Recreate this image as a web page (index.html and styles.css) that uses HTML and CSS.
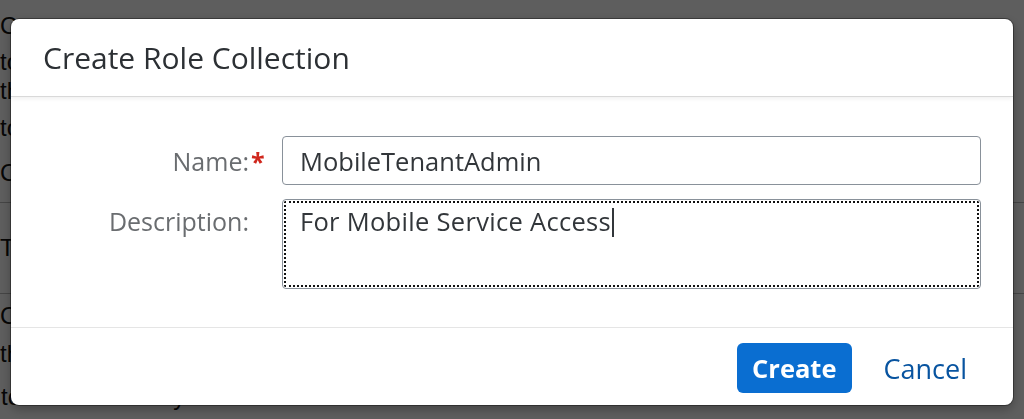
FILE: index.html
```html
<!DOCTYPE html>
<html lang="en">
<head>
  <meta charset="UTF-8" />
  <title>Create Role Collection</title>
  <link rel="stylesheet" href="styles.css">
</head>
<body>
  <!-- page behind the dialog (mostly hidden) -->
  <div class="page">
    <div class="line l1">Co</div>
    <div class="line l2">to</div>
    <div class="line l3">th</div>
    <div class="line l4">to</div>
    <div class="line l5 ruled">Cr</div>
    <div class="line l6 ruled">Th</div>
    <div class="line l7">Ch</div>
    <div class="line l8">th</div>
    <div class="line l9">to the tenant only</div>
  </div>

  <div class="overlay">
    <div class="dialog" role="dialog" aria-labelledby="dlgTitle">
      <div class="dialog-header">
        <h1 id="dlgTitle">Create Role Collection</h1>
      </div>

      <div class="dialog-body">
        <label class="form-label" for="rcName">
          <span>Name:</span><span class="req">*</span>
        </label>
        <input id="rcName" class="form-input" type="text" value="MobileTenantAdmin">

        <label class="form-label top" for="rcDesc">
          <span>Description:</span><span class="req"></span>
        </label>
        <div id="rcDesc" class="form-textarea" role="textbox" aria-multiline="true">For Mobile Service Access<span class="caret"></span></div>
      </div>

      <div class="dialog-footer">
        <button class="btn btn-primary">Create</button>
        <button class="btn btn-link">Cancel</button>
      </div>
    </div>
  </div>
</body>
</html>
```

FILE: styles.css
```css
/* GLOBAL */
* {
  box-sizing: border-box;
}

body {
  margin: 0;
  padding: 0;
  font-family: 'Open Sans', Arial, sans-serif;
  background-color: #fff;
  color: #32363a;
  overflow: hidden;
}

/* PAGE behind the overlay */
.page {
  padding-top: 8px;
  font-family: 'Liberation Sans', Arial, sans-serif;
  font-size: 24px;
  color: #111;
  white-space: nowrap;
}
.l1 { height: 36px; line-height: 36px; }
.l2 { height: 36px; line-height: 36px; }
.l3 { height: 22px; line-height: 22px; }
.l4 { height: 52px; line-height: 52px; }
.l5 { height: 49px; line-height: 38px; }
.l6 { height: 91px; line-height: 90px; }
.l7 { height: 44px; line-height: 44px; }
.l8 { height: 32px; line-height: 32px; }
.l9 { height: 54px; line-height: 54px; padding-left: 1px; }
.ruled { border-bottom: 1px solid #bbb; }

/* OVERLAY + DIALOG */
.overlay {
  position: fixed;
  inset: 0;
  display: flex;
  padding: 19px 11px 14px 11px;
  background-color: rgba(0, 0, 0, 0.63);
}

.dialog {
  flex: 1;
  display: flex;
  flex-direction: column;
  background-color: #fff;
  border-radius: 8px;
  box-shadow: 0 0 0 1px rgba(0, 0, 0, 0.35), 0 4px 12px rgba(0, 0, 0, 0.3);
}

.dialog-header {
  height: 78px;
  display: flex;
  align-items: center;
  padding: 0 32px;
  border-bottom: 1px solid #d9d9d9;
  box-shadow: 0 2px 4px rgba(0, 0, 0, 0.06);
}
.dialog-header h1 {
  margin: 0;
  font-size: 30px;
  font-weight: 400;
  color: #2c3034;
}

/* FORM */
.dialog-body {
  display: grid;
  grid-template-columns: 255px 1fr;
  column-gap: 16px;
  row-gap: 14px;
  padding: 39px 32px 38px 0;
}

.form-label {
  display: flex;
  justify-content: flex-end;
  align-items: center;
  font-size: 25px;
  color: #6a6d70;
}
.form-label.top {
  align-items: flex-start;
  padding-top: 5px;
}
.req {
  width: 17px;
  padding-left: 2px;
  color: #d0271d;
  font-weight: 700;
}

.form-input,
.form-textarea {
  width: 100%;
  margin: 0;
  border: 1px solid #89919a;
  border-radius: 4px;
  background: #fff;
  font-family: inherit;
  font-size: 25.5px;
  color: #32363a;
}
.form-input {
  height: 49px;
  padding: 0 17px;
}
.form-textarea {
  height: 90px;
  padding: 4px 17px;
  letter-spacing: 0.3px;
  outline: 2px dotted #111;
  outline-offset: -4px;
}
.caret {
  display: inline-block;
  width: 2px;
  height: 29px;
  margin-left: 1px;
  vertical-align: -6px;
  background-color: #32363a;
}

/* FOOTER */
.dialog-footer {
  flex: 1;
  display: flex;
  justify-content: flex-end;
  align-items: flex-start;
  gap: 16px;
  padding: 15px 30px 0;
  border-top: 1px solid #e5e5e5;
}

.btn {
  height: 50px;
  border: none;
  font-family: inherit;
  cursor: pointer;
}
.btn-primary {
  padding: 0 15px;
  border-radius: 6px;
  background-color: #0a6ed1;
  color: #fff;
  font-size: 25.5px;
  font-weight: 700;
}
.btn-link {
  padding: 0 16px;
  background: none;
  color: #0854a0;
  font-size: 27px;
}
```
